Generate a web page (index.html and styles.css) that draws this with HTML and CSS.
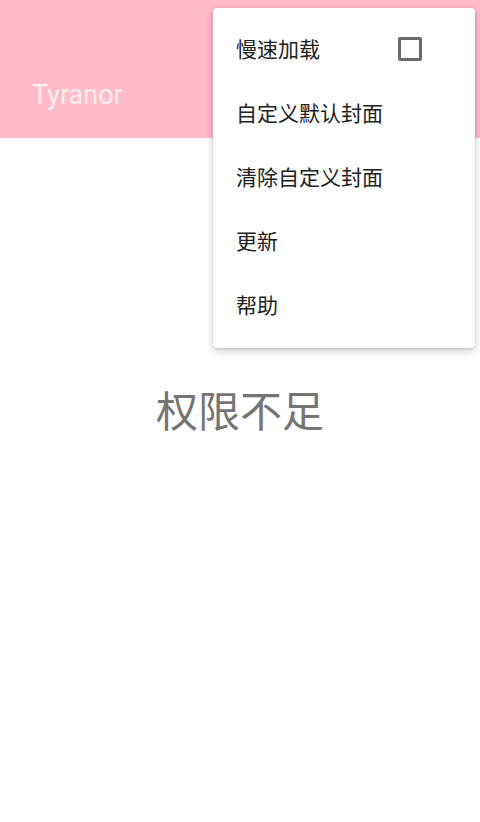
FILE: index.html
```html
<!DOCTYPE html>
<html lang="zh-CN">
<head>
<meta charset="utf-8">
<title>Tyranor</title>
<link rel="stylesheet" href="styles.css">
</head>
<body>
<header class="appbar">
  <span class="title">Tyranor</span>
</header>
<main class="content">
  <p class="message">权限不足</p>
</main>
<div class="menu">
  <div class="item"><span>慢速加载</span><span class="checkbox"></span></div>
  <div class="item"><span>自定义默认封面</span></div>
  <div class="item"><span>清除自定义封面</span></div>
  <div class="item"><span>更新</span></div>
  <div class="item"><span>帮助</span></div>
</div>
</body>
</html>
```
FILE: styles.css
```css
html, body {
  margin: 0;
  padding: 0;
  background: #ffffff;
  font-family: Roboto, "Noto Sans CJK SC", sans-serif;
}
body {
  width: 480px;
  height: 822px;
  position: relative;
  overflow: hidden;
}
.appbar {
  height: 138px;
  background: #ffbbc7;
  display: flex;
  align-items: flex-end;
  box-sizing: border-box;
  padding: 0 0 28px 32px;
}
.title {
  color: #fbecef;
  font-size: 27px;
  line-height: 30px;
}
.content {
  display: flex;
  justify-content: center;
  padding-top: 245px;
}
.message {
  margin: 0;
  font-size: 42px;
  line-height: 52px;
  color: #757575;
  font-family: "Noto Sans CJK SC", sans-serif;
}
.menu {
  position: absolute;
  top: 8px;
  left: 213px;
  width: 262px;
  box-sizing: border-box;
  padding: 8px 0 12px;
  background: #ffffff;
  border-radius: 4px;
  box-shadow: 0 3px 8px rgba(0,0,0,0.18), 0 1px 3px rgba(0,0,0,0.12);
}
.item {
  height: 64px;
  display: flex;
  align-items: center;
  justify-content: space-between;
  padding: 0 53px 0 23px;
  font-size: 21px;
  color: #212121;
  font-family: "Noto Sans CJK SC", sans-serif;
}
.checkbox {
  width: 24px;
  height: 24px;
  box-sizing: border-box;
  border: 3px solid #6b6b6b;
  border-radius: 2px;
  margin-top: 2px;
}
```
